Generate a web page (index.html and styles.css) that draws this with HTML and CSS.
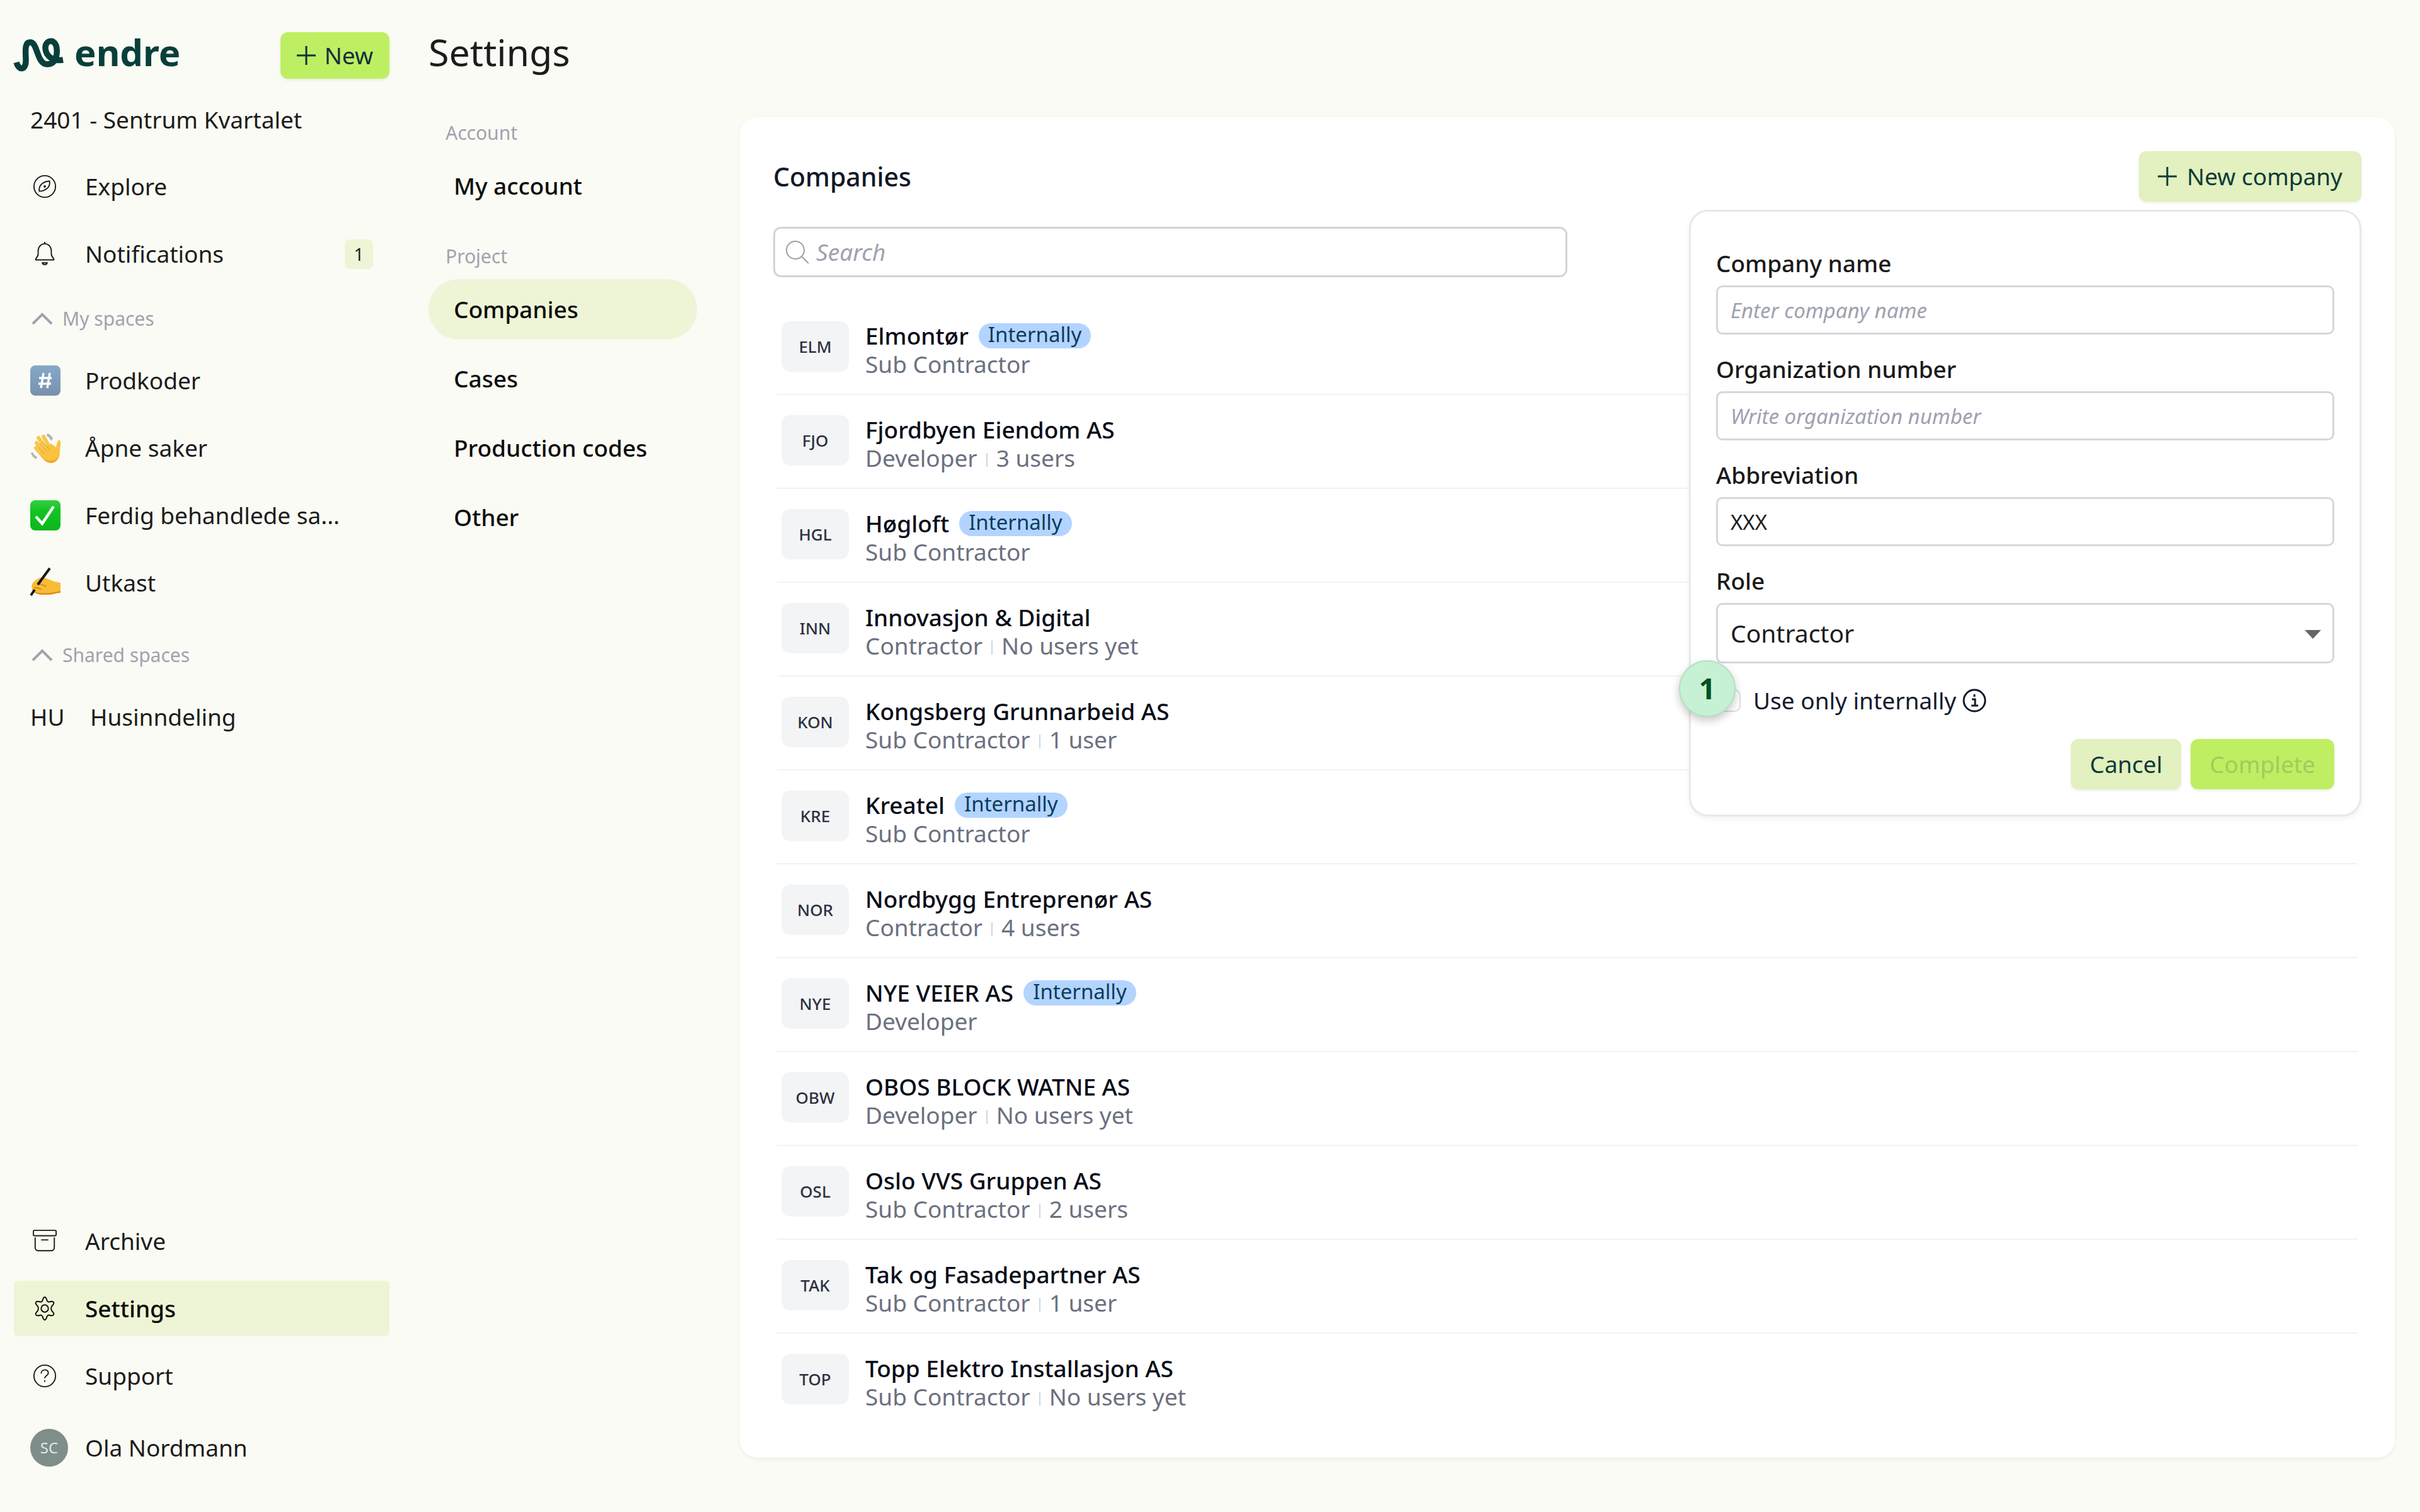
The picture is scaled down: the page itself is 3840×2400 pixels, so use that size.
FILE: index.html
```html
<!DOCTYPE html>
<html lang="en">
<head>
    <meta charset="UTF-8">
    <title>Settings - endre</title>
    <link rel="stylesheet" href="styles.css">
</head>
<body>
    <aside class="sidebar">
        <div class="brand-row">
            <a href="#" class="brand">
                <svg class="brand-mark" viewBox="0 0 80 56" fill="none" stroke="currentColor" stroke-width="9.500">
                    <path d="M4 40 C8 54 19 52 19 38 C19 24 16 8 26 8 C38 8 36 43 53 43 C67 43 69 27 68 18 C67 2 49 3 50 18 C51 30 62 39 78 36"/>
                </svg>
                <span>endre</span>
            </a>
            <button class="btn btn-primary btn-new">
                <svg class="plus" viewBox="0 0 30 30" fill="none" stroke="currentColor" stroke-width="3"><path d="M15 0v30M0 15h30"/></svg>
                New
            </button>
        </div>
        <div class="project-name">2401 - Sentrum Kvartalet</div>

        <nav class="side-nav">
            <a href="#" class="nav-item">
                <svg class="icon" viewBox="0 0 40 40" fill="none" stroke="currentColor" stroke-width="2"><circle cx="20" cy="20" r="18"/><path d="M28 11c1 5-1 10-5 13s-8 4-12 4c-1-5 1-10 5-13s8-4 12-4z"/><circle cx="20" cy="20" r="1"/></svg>
                Explore
            </a>
            <a href="#" class="nav-item">
                <svg class="icon" viewBox="0 0 40 40" fill="none" stroke="currentColor" stroke-width="2"><path d="M5 30v-2c2-2 4-4 4-8v-5C9 8 14 3 20 3s11 5 11 12v5c0 4 2 6 4 8v2z"/><path d="M20 3V0M16 35c1 4 7 4 8 0z"/></svg>
                Notifications
                <span class="count">1</span>
            </a>
        </nav>

        <section class="space-group">
            <h2 class="space-title">
                <svg class="chevron" viewBox="0 0 34 20" fill="none" stroke="currentColor" stroke-width="4"><path d="M2 18 17 3l15 15"/></svg>
                My spaces
            </h2>
            <a href="#" class="nav-item">
                <svg class="emoji" viewBox="0 0 48 48"><defs><linearGradient id="slate" x2="0" y2="1"><stop offset="0" stop-color="#86a9c8"/><stop offset="1" stop-color="#7890ad"/></linearGradient></defs><rect width="48" height="48" rx="8" fill="url(#slate)"/><path d="M21 12l-4 24M31 12l-4 24M14 20h20M13 29h20" stroke="#fff" stroke-width="3.5" fill="none"/></svg>
                Prodkoder
            </a>
            <a href="#" class="nav-item">
                <svg class="emoji" viewBox="0 0 48 48" fill="none" stroke-linecap="round"><path d="M27 1c4 1 7 4 9 8l-3 4c-2-4-4-7-7-8zM1 32c1 4 4 7 8 10l2-4c-3-1-6-4-7-7z" fill="#b4b4b4"/><path d="M20 37 9 24M24 33 10 16M28 29 13 8M33 27 21 6" stroke="#f9c74c" stroke-width="6"/><path d="M16 30 33 17l8 6c1-5 2-10 5-12 4 3 1 12 1 20 0 10-6 16-14 16-7 0-11-5-17-11z" fill="#f9c33f"/><path d="M17 37c8 9 22 10 29-1-2 8-7 12-13 12-7 0-12-5-16-11z" fill="#f0a92c"/><path d="M13 23l9 10M15 17l11 12M19 14l11 12" stroke="#dc9a32"/></svg>
                Åpne saker
            </a>
            <a href="#" class="nav-item">
                <svg class="emoji" viewBox="0 0 48 48"><defs><linearGradient id="green" x2="0" y2="1"><stop offset="0" stop-color="#37cf43"/><stop offset=".35" stop-color="#12c422"/><stop offset="1" stop-color="#0eb61c"/></linearGradient></defs><rect width="48" height="48" rx="8" fill="url(#green)"/><path d="M9 26l10 11L37 10" stroke="#fff" stroke-width="4.5" fill="none"/></svg>
                Ferdig behandlede sa...
            </a>
            <a href="#" class="nav-item">
                <svg class="emoji" viewBox="0 0 48 48" fill="none"><path d="M5 23c5-5 12-9 18-7l15 6 10 2v15c-8 0-10 4-22 4-8 0-20-1-22-6-2-4-3-10 1-14z" fill="#f8bc36"/><path d="M6 38c10 4 28 3 42-1v3c-8 0-10 3-22 3-8 0-17 0-20-5z" fill="#e08a1c"/><path d="M10 26c6-1 11 2 16 4M6 32c5-1 9 1 12 3" stroke="#d98c1f" stroke-width="2"/><path d="M31 1 12 27M7 35l-6 9" stroke="#17191c" stroke-width="4"/></svg>
                Utkast
            </a>
        </section>

        <section class="space-group">
            <h2 class="space-title">
                <svg class="chevron" viewBox="0 0 34 20" fill="none" stroke="currentColor" stroke-width="4"><path d="M2 18 17 3l15 15"/></svg>
                Shared spaces
            </h2>
            <a href="#" class="nav-item"><span class="initials">HU</span>Husinndeling</a>
        </section>

        <nav class="bottom-nav">
            <a href="#" class="nav-item">
                <svg class="icon" viewBox="0 0 40 40" fill="none" stroke="currentColor" stroke-width="2"><rect x="1" y="2" width="38" height="9" rx="2"/><path d="M4 14v16c0 4 2 6 5 6h22c3 0 5-2 5-6V14M14 18h12"/></svg>
                Archive
            </a>
            <a href="#" class="nav-item active">
                <svg class="icon" viewBox="0 0 40 40" fill="none" stroke="currentColor" stroke-width="2"><path d="M16.500 6C17.500 2 18.500 1 20 1s2.500 1 3.500 5c.6 2.400 2.500 3.400 4.800 2.700 4-1.200 5.500-.7 6.400.8.9 1.600.8 3-2.200 5.800-2.400 2.200-2.400 7.200 0 9.400 3 2.800 3.100 4.200 2.200 5.800-.9 1.500-2.400 2-6.400.8-2.300-.7-4.200.3-4.800 2.700-1 4-2 5-3.500 5s-2.500-1-3.500-5c-.6-2.400-2.500-3.400-4.800-2.700-4 1.200-5.500.7-6.400-.8-.9-1.600-.8-3 2.200-5.800 2.400-2.200 2.400-7.200 0-9.400-3-2.800-3.100-4.200-2.200-5.800.9-1.500 2.400-2 6.400-.8 2.300.7 4.200-.3 4.800-2.700z"/><circle cx="20" cy="20" r="6"/></svg>
                Settings
            </a>
            <a href="#" class="nav-item">
                <svg class="icon" viewBox="0 0 40 40" fill="none" stroke="currentColor" stroke-width="2"><circle cx="20" cy="20" r="18"/><path d="M14 16c0-8 12-8 12-1 0 5-6 4-6 9M20 27v3"/></svg>
                Support
            </a>
            <a href="#" class="nav-item nav-user"><span class="avatar">SC</span>Ola Nordmann</a>
        </nav>
    </aside>

    <main class="main">
        <h1 class="page-title">Settings</h1>
        <div class="content">
            <nav class="settings-nav">
                <section class="settings-group">
                    <h2>Account</h2>
                    <a href="#">My account</a>
                </section>
                <section class="settings-group">
                    <h2>Project</h2>
                    <a href="#" class="active">Companies</a>
                    <a href="#">Cases</a>
                    <a href="#">Production codes</a>
                    <a href="#">Other</a>
                </section>
            </nav>

            <section class="card">
                <div class="card-head">
                    <h2>Companies</h2>
                    <button class="btn btn-soft">
                        <svg class="plus" viewBox="0 0 30 30" fill="none" stroke="currentColor" stroke-width="3"><path d="M15 0v30M0 15h30"/></svg>
                        New company
                    </button>

                    <!-- new company popover -->
                    <form class="popover">
                        <label for="name">Company name</label>
                        <input type="text" id="name" placeholder="Enter company name">
                        <label for="orgnr">Organization number</label>
                        <input type="text" id="orgnr" placeholder="Write organization number">
                        <label for="abbr">Abbreviation</label>
                        <input type="text" id="abbr" value="XXX">
                        <label for="role">Role</label>
                        <div class="select-wrap">
                            <select id="role">
                                <option>Contractor</option>
                                <option>Sub Contractor</option>
                                <option>Developer</option>
                            </select>
                            <svg class="caret" viewBox="0 0 26 14"><path d="M0 0h26L13 14z" fill="#666"/></svg>
                        </div>
                        <div class="check-row">
                            <input type="checkbox" id="internal">
                            <label for="internal">Use only internally</label>
                            <svg class="info" viewBox="0 0 38 38" fill="none" stroke="currentColor" stroke-width="3"><circle cx="19" cy="19" r="17"/><path d="M15 17h5v10M14 27h11M19 9v4"/></svg>
                            <span class="step">1</span>
                        </div>
                        <div class="actions">
                            <button type="button" class="btn btn-soft">Cancel</button>
                            <button type="submit" class="btn btn-primary" disabled>Complete</button>
                        </div>
                    </form>
                </div>

                <div class="search">
                    <svg viewBox="0 0 38 38" fill="none" stroke="currentColor" stroke-width="2"><circle cx="16" cy="16" r="14"/><path d="M26 26l11 11"/></svg>
                    <input type="text" placeholder="Search" aria-label="Search">
                </div>

                <ul class="companies">
                    <li>
                        <span class="code">ELM</span>
                        <div><div class="name">Elmontør <span class="tag">Internally</span></div><div class="meta"><span>Sub Contractor</span></div></div>
                    </li>
                    <li>
                        <span class="code">FJO</span>
                        <div><div class="name">Fjordbyen Eiendom AS</div><div class="meta"><span>Developer</span><span>3 users</span></div></div>
                    </li>
                    <li>
                        <span class="code">HGL</span>
                        <div><div class="name">Høgloft <span class="tag">Internally</span></div><div class="meta"><span>Sub Contractor</span></div></div>
                    </li>
                    <li>
                        <span class="code">INN</span>
                        <div><div class="name">Innovasjon &amp; Digital</div><div class="meta"><span>Contractor</span><span>No users yet</span></div></div>
                    </li>
                    <li>
                        <span class="code">KON</span>
                        <div><div class="name">Kongsberg Grunnarbeid AS</div><div class="meta"><span>Sub Contractor</span><span>1 user</span></div></div>
                    </li>
                    <li>
                        <span class="code">KRE</span>
                        <div><div class="name">Kreatel <span class="tag">Internally</span></div><div class="meta"><span>Sub Contractor</span></div></div>
                    </li>
                    <li>
                        <span class="code">NOR</span>
                        <div><div class="name">Nordbygg Entreprenør AS</div><div class="meta"><span>Contractor</span><span>4 users</span></div></div>
                    </li>
                    <li>
                        <span class="code">NYE</span>
                        <div><div class="name">NYE VEIER AS <span class="tag">Internally</span></div><div class="meta"><span>Developer</span></div></div>
                    </li>
                    <li>
                        <span class="code">OBW</span>
                        <div><div class="name">OBOS BLOCK WATNE AS</div><div class="meta"><span>Developer</span><span>No users yet</span></div></div>
                    </li>
                    <li>
                        <span class="code">OSL</span>
                        <div><div class="name">Oslo VVS Gruppen AS</div><div class="meta"><span>Sub Contractor</span><span>2 users</span></div></div>
                    </li>
                    <li>
                        <span class="code">TAK</span>
                        <div><div class="name">Tak og Fasadepartner AS</div><div class="meta"><span>Sub Contractor</span><span>1 user</span></div></div>
                    </li>
                    <li>
                        <span class="code">TOP</span>
                        <div><div class="name">Topp Elektro Installasjon AS</div><div class="meta"><span>Sub Contractor</span><span>No users yet</span></div></div>
                    </li>
                </ul>
            </section>
        </div>
    </main>
</body>
</html>
```

FILE: styles.css
```css
* {
    box-sizing: border-box;
}

body {
    margin: 0;
    min-height: 100vh;
    display: flex;
    background: #fafbf4;
    color: #1c1c1c;
    font-family: "Noto Sans", sans-serif;
    font-size: 37px;
    line-height: 52px;
}

h1, h2, ul {
    margin: 0;
    padding: 0;
    font-weight: 400;
}

a {
    color: inherit;
    text-decoration: none;
}

button, input, select {
    font: inherit;
    color: inherit;
}

svg {
    display: block;
    flex: none;
    overflow: visible;
}

/* Buttons */
.btn {
    display: flex;
    align-items: center;
    justify-content: center;
    gap: 16px;
    height: 80px;
    padding: 0 30px;
    border: 0;
    border-radius: 12px;
    box-shadow: 0 2px 4px rgba(0, 0, 0, 0.08);
    color: #0d3b38;
    white-space: nowrap;
}

.btn-primary {
    background: #beef62;
}

.btn-primary:disabled {
    color: #a0cc5e;
}

.btn-soft {
    background: #e3f0bf;
}

.plus {
    width: 30px;
    height: 30px;
}

/* Sidebar */
.sidebar {
    display: flex;
    flex-direction: column;
    flex: none;
    width: 640px;
    padding: 51px 22px 58px;
}

.brand-row {
    display: flex;
    align-items: flex-start;
    justify-content: space-between;
    height: 74px;
}

.brand {
    display: flex;
    align-items: flex-end;
    gap: 16px;
    color: #083f3a;
    font-size: 58px;
    font-weight: 700;
    line-height: 64px;
}

.brand-mark {
    width: 80px;
    height: 56px;
}

.btn-new {
    height: 74px;
    padding: 0 26px;
    gap: 14px;
    color: #14303a;
}

.project-name {
    margin: 39px 0 27px;
    padding: 0 26px;
}

.nav-item {
    display: flex;
    align-items: center;
    height: 88px;
    margin-bottom: 19px;
    padding: 0 26px;
    border-radius: 6px;
    white-space: nowrap;
}

.icon {
    width: 38px;
    height: 38px;
    margin: 0 45px 0 4px;
}

.emoji {
    width: 48px;
    height: 48px;
    margin-right: 39px;
}

.initials {
    width: 95px;
}

.count {
    width: 45px;
    height: 47px;
    margin-left: auto;
    border-radius: 8px;
    background: #eef5d6;
    font-size: 28px;
    line-height: 47px;
    text-align: center;
}

.side-nav {
    margin-top: 9px;
}

.space-group + .space-group {
    margin-top: 12px;
}

.space-title {
    display: flex;
    align-items: center;
    gap: 15px;
    height: 75px;
    margin-bottom: 19px;
    padding: 4px 28px 0;
    color: #a0a2b0;
    font-size: 30px;
}

.chevron {
    width: 34px;
    height: 20px;
}

.bottom-nav {
    margin-top: auto;
}

.active {
    background: #eef5d6;
    color: #0c0c0c;
    font-weight: 500;
}

.nav-user {
    margin: 26px 0 0;
}

.avatar {
    width: 60px;
    height: 60px;
    margin-right: 27px;
    border-radius: 50%;
    background: #7f8d8b;
    color: #dfe6e5;
    font-size: 24px;
    line-height: 60px;
    text-align: center;
}

/* Main */
.main {
    flex: 1;
    min-width: 0;
    padding: 42px 40px 40px;
}

.page-title {
    margin-bottom: 64px;
    font-size: 59px;
    line-height: 80px;
}

.content {
    display: flex;
    align-items: flex-start;
    gap: 68px;
}

.settings-nav {
    flex: none;
    width: 426px;
    padding-top: 3px;
}

.settings-group {
    display: flex;
    flex-direction: column;
    gap: 14px;
    margin-bottom: 42px;
}

.settings-group h2 {
    padding-left: 27px;
    color: #a0a2b0;
    font-size: 30px;
    line-height: 44px;
}

.settings-group a {
    padding: 0 40px;
    border-radius: 48px;
    color: #0c0c0c;
    font-weight: 500;
    line-height: 96px;
}

.card {
    flex: 1;
    min-width: 0;
    padding: 54px 53px 50px;
    border-radius: 28px;
    background: #fff;
    box-shadow: 0 2px 6px rgba(0, 0, 0, 0.06);
}

.card-head {
    position: relative;
    display: flex;
    align-items: center;
    justify-content: space-between;
}

.card-head h2 {
    color: #111827;
    font-size: 41px;
    font-weight: 500;
}

.search {
    display: flex;
    align-items: center;
    gap: 11px;
    width: 50%;
    height: 80px;
    margin: 40px 0 38px;
    padding: 0 16px;
    border: 3px solid #d4d4d6;
    border-radius: 12px;
    color: #9c9fa8;
}

.search svg {
    width: 38px;
    height: 38px;
}

.search input {
    flex: 1;
    min-width: 0;
    padding: 0;
    border: 0;
    outline: 0;
    background: none;
}

::placeholder {
    color: #9ea1b0;
    font-style: italic;
    opacity: 1;
}

.companies {
    margin: 0 6px;
    list-style: none;
}

.companies li {
    display: flex;
    gap: 26px;
    padding: 32px 7px 25px;
    border-bottom: 2px solid #f1f2f3;
}

.companies li:last-child {
    border-bottom: 0;
}

.code {
    width: 107px;
    height: 80px;
    border-radius: 14px;
    background: #f3f4f6;
    color: #2c3240;
    font-size: 26px;
    font-weight: 500;
    line-height: 80px;
    text-align: center;
}

.name {
    display: flex;
    align-items: center;
    gap: 16px;
    color: #080c18;
    font-weight: 500;
    line-height: 45px;
}

.tag {
    height: 40px;
    padding: 0 15px;
    border-radius: 20px;
    background: #b3d4ff;
    color: #0b3c5c;
    font-size: 33px;
    font-weight: 400;
    line-height: 36px;
}

.meta {
    display: flex;
    align-items: center;
    color: #6b7080;
    line-height: 45px;
}

.meta span + span::before {
    content: "";
    display: inline-block;
    width: 2px;
    height: 22px;
    margin: 0 14px;
    background: #d3d5da;
}

/* Popover */
.popover {
    position: absolute;
    top: 93px;
    right: 0;
    width: 1067px;
    padding: 56px 40px 40px;
    border: 3px solid #e8e8ea;
    border-radius: 30px;
    background: #fff;
    box-shadow: 0 4px 8px rgba(0, 0, 0, 0.05);
}

.popover > label {
    display: block;
    margin-bottom: 9px;
    color: #1a1a1a;
    font-weight: 500;
}

.popover input[type="text"] {
    display: block;
    width: 100%;
    height: 78px;
    margin-bottom: 29px;
    padding: 0 20px;
    border: 3px solid #d6d7dd;
    border-radius: 10px;
    outline: 0;
    font-size: 33px;
}

.select-wrap {
    position: relative;
}

.popover select {
    display: block;
    width: 100%;
    height: 96px;
    padding: 0 20px;
    border: 3px solid #d6d7dd;
    border-radius: 10px;
    background: #fff;
    font-size: 39px;
    appearance: none;
}

.caret {
    position: absolute;
    top: 43px;
    right: 21px;
    width: 26px;
    height: 14px;
}

.check-row {
    position: relative;
    display: flex;
    align-items: center;
    margin: 33px 0 35px;
    color: #131a2c;
}

.check-row input {
    width: 36px;
    height: 36px;
    margin: 0 20px 0 3px;
    border: 2px solid #dcdcde;
    border-radius: 10px;
    appearance: none;
}

.info {
    width: 38px;
    height: 38px;
    margin-left: 10px;
}

.step {
    position: absolute;
    top: -38px;
    left: -59px;
    width: 90px;
    height: 90px;
    border: 2px solid #b2e2c3;
    border-radius: 50%;
    background: #c6f1d5;
    box-shadow: 0 6px 14px rgba(0, 0, 0, 0.22);
    color: #04501f;
    font-size: 46px;
    font-weight: 700;
    line-height: 84px;
    text-align: center;
}

.actions {
    display: flex;
    justify-content: flex-end;
    gap: 15px;
}
```
